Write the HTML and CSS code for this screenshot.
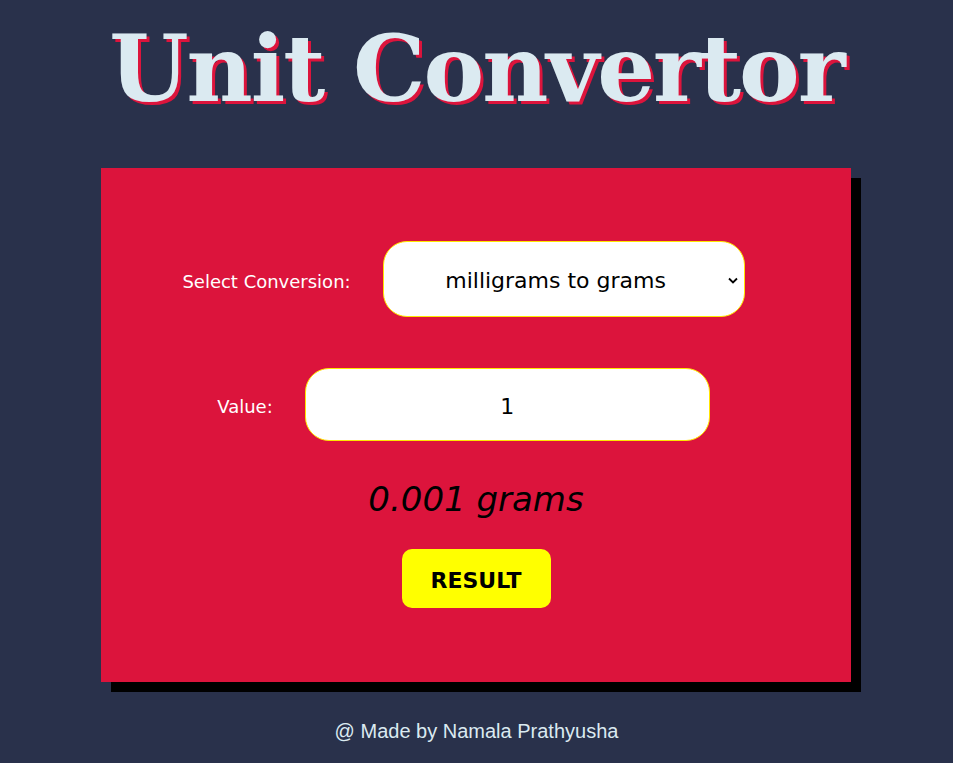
FILE: index.html
```html
<!DOCTYPE html>
<html>
<head>
<meta charset="utf-8">
<link rel="stylesheet" href="styles.css">
</head>
<body>
<h1 class="title">Unit Convertor</h1>
<div class="card">
  <div class="row row-select">
    <label class="label">Select Conversion:</label>
    <div class="select">
      <span class="select-text">milligrams to grams</span>
      <svg class="chev" width="10" height="7" viewBox="0 0 10 7"><path d="M1 1.5 L5 5.5 L9 1.5" fill="none" stroke="#000" stroke-width="1.8"/></svg>
    </div>
  </div>
  <div class="row row-value">
    <label class="label">Value:</label>
    <div class="input">1</div>
  </div>
  <div class="result">0.001 grams</div>
  <button class="btn">RESULT</button>
</div>
<footer class="footer">@ Made by Namala Prathyusha</footer>
</body>
</html>
```
FILE: styles.css
```css
html, body { margin: 0; padding: 0; }
body {
  background: #29314b;
  width: 953px;
  height: 763px;
  overflow: hidden;
  font-family: "Comic Sans MS", "DejaVu Sans", sans-serif;
}
.title {
  margin: 0;
  padding-top: 14px;
  height: 160px;
  box-sizing: border-box;
  text-align: center;
  font-family: "DejaVu Serif", serif;
  font-weight: bold;
  font-size: 91px;
  line-height: 110px;
  letter-spacing: -2px;
  color: #dbeaf1;
  text-shadow: 3px 3px 0 #dc143c;
}
.card {
  margin: 8px 0 0 101px;
  width: 750px;
  height: 514px;
  box-sizing: border-box;
  background: #dc143c;
  box-shadow: 10px 10px 0 #000;
  padding-top: 73px;
  display: flex;
  flex-direction: column;
  align-items: center;
}
.row {
  display: flex;
  align-items: center;
  margin-right: 25px;
}
.label {
  color: #fff;
  font-size: 18px;
  padding-top: 4px;
}
.row-select .label { margin-right: 32px; }
.row-value .label { margin-right: 32px; }
.select {
  width: 362px;
  height: 76px;
  box-sizing: border-box;
  background: #fff;
  border: 1px solid #ffe600;
  border-radius: 24px;
  display: flex;
  align-items: center;
  justify-content: center;
  position: relative;
  font-size: 22px;
  color: #000;
  padding-top: 3px;
  padding-right: 16px;
}
.chev { position: absolute; right: 6px; top: 35px; }
.row-value { margin-top: 51px; }
.input {
  width: 405px;
  height: 73px;
  box-sizing: border-box;
  background: #fff;
  border: 1px solid #ffe600;
  border-radius: 24px;
  display: flex;
  align-items: center;
  justify-content: center;
  font-size: 22px;
  color: #000;
  padding-top: 3px;
}
.result {
  margin-top: 34px;
  font-size: 34px;
  font-style: italic;
  color: #000;
  line-height: 48px;
}
.btn {
  margin-top: 26px;
  width: 149px;
  height: 59px;
  border: none;
  border-radius: 10px;
  background: #ffff00;
  font-family: "Comic Sans MS", "DejaVu Sans", sans-serif;
  font-weight: bold;
  font-size: 22px;
  color: #000;
  padding: 3px 0 0 0;
}
.footer {
  margin-top: 38px;
  text-align: center;
  font-family: "Liberation Sans", Arial, sans-serif;
  font-size: 20px;
  color: #dbeaf1;
}
```
